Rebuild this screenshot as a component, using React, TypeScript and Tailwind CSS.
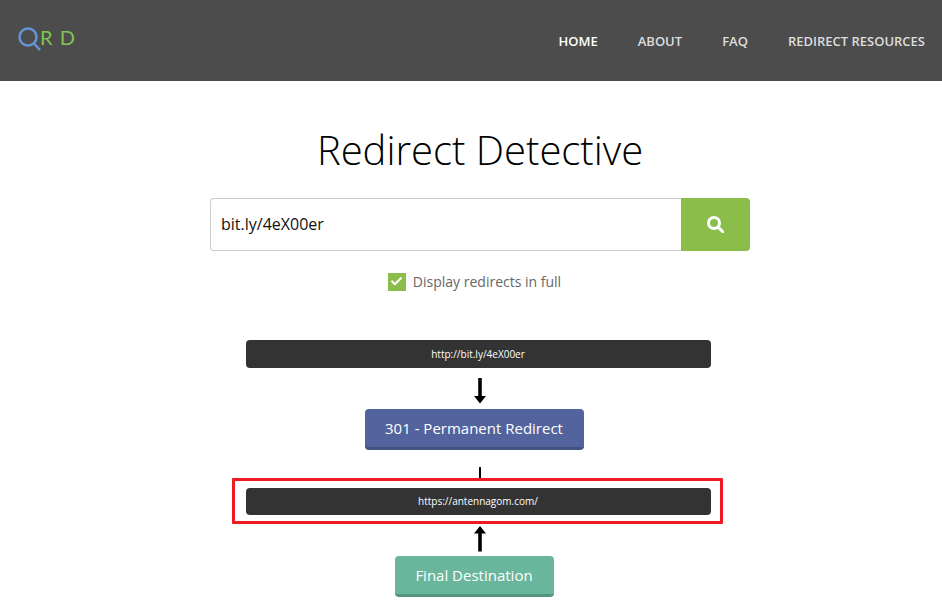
import { Check } from "lucide-react";

function ArrowDown() {
  return (
    <svg width="12" height="26" viewBox="0 0 12 26" className="block">
      <path d="M4.200 0h3.600v18H12l-6 7.500L0 18h4.200z" fill="#000" />
    </svg>
  );
}

function ArrowUp() {
  return (
    <svg width="12" height="26" viewBox="0 0 12 26" className="block">
      <path d="M4.200 25.500h3.600v-18H12L6 0 0 7.500h4.200z" fill="#000" />
    </svg>
  );
}

function UrlBar({ url, short }: { url: string; short?: boolean }) {
  return (
    <div className={`${short ? "h-[27px]" : "h-[28px]"} w-[465px] rounded-[4px] bg-[#333333] flex items-center justify-center text-[10px] text-white`}>
      {url}
    </div>
  );
}

export default function App() {
  return (
    <div className="h-[610px] w-[942px] overflow-hidden bg-white font-['Open_Sans',sans-serif]">
      {/* header */}
      <header className="h-[81px] bg-[#4c4c4c] flex justify-between">
        <div className="flex items-start pl-[18px] pt-[27px]">
          <svg width="23" height="24" viewBox="0 0 23 24" className="block">
            <circle cx="10" cy="10" r="8.500" fill="none" stroke="#6495d6" strokeWidth="2.500" />
            <path d="M16 16.500l6 6.500" stroke="#6495d6" strokeWidth="2.500" fill="none" />
          </svg>
          <span className="font-['Lato',sans-serif] text-[20px] leading-[20px] tracking-[1px] text-[#7fc552] -ml-[1px]">R D</span>
        </div>
        <nav className="flex items-center gap-10 pr-[17px] pt-[3px] text-[13px] font-semibold">
          <a className="text-white">HOME</a>
          <a className="text-[#dddddd]">ABOUT</a>
          <a className="text-[#dddddd]">FAQ</a>
          <a className="text-[#dddddd]">REDIRECT RESOURCES</a>
        </nav>
      </header>

      {/* main column, sits a bit right of the window centre */}
      <main className="flex flex-col items-center pl-[18px]">
        <h1 className="mt-[41px] h-[56px] text-[40px] leading-[56px] font-light text-black">Redirect Detective</h1>

        <div className="mt-[20px] flex w-[540px] h-[53px]">
          <div className="flex-1 flex items-center pl-[10px] pb-[1px] border border-r-0 border-[#cccccc] rounded-l-[4px] text-[16px] text-[#111111]">
            bit.ly/4eX00er
          </div>
          <button className="w-[69px] bg-[#8bbd4b] rounded-r-[4px] flex items-center justify-center">
            <svg width="17" height="17" viewBox="0 0 17 17" className="block">
              <circle cx="7" cy="7" r="5.500" fill="none" stroke="#fff" strokeWidth="3" />
              <path d="M11 11l4.800 4.800" stroke="#fff" strokeWidth="3" strokeLinecap="round" fill="none" />
            </svg>
          </button>
        </div>

        <label className="mt-[20px] mr-[11px] flex items-center gap-[7px] text-[14px] text-[#666666]">
          <span className="h-[18px] w-[18px] bg-[#8bbd4b] flex items-center justify-center">
            <Check size={13} strokeWidth={4} className="text-white" />
          </span>
          Display redirects in full
        </label>

        <div className="mt-[48px] mr-[4px] flex flex-col items-center">
          <UrlBar url="http://bit.ly/4eX00er" />
          <div className="mt-[10px] ml-[3px]">
            <ArrowDown />
          </div>
          <div className="mt-[5px] mr-[8px] h-[41px] w-[219px] rounded-[4px] bg-[#52639d] border-b-[3px] border-[#43527f] flex items-center justify-center text-[15px] text-white">
            301 - Permanent Redirect
          </div>
          <div className="mt-[17px] ml-[3px] h-[11px] w-[2px] bg-black" />
          <div className="-ml-[14px] -mr-[12px] border-[3px] border-[#ed1c24] pl-[11px] pr-[9px] pt-[7px] pb-[6px] rounded-[1px] bg-white">
            <UrlBar url="https://antennagom.com/" short />
          </div>
          <div className="mt-[2px] ml-[3px]">
            <ArrowUp />
          </div>
          <div className="mt-[4px] mr-[8px] h-[41px] w-[159px] rounded-[4px] bg-[#69b69c] border-b-[3px] border-[#559580] flex items-center justify-center text-[15px] text-white">
            Final Destination
          </div>
        </div>
      </main>
    </div>
  );
}
